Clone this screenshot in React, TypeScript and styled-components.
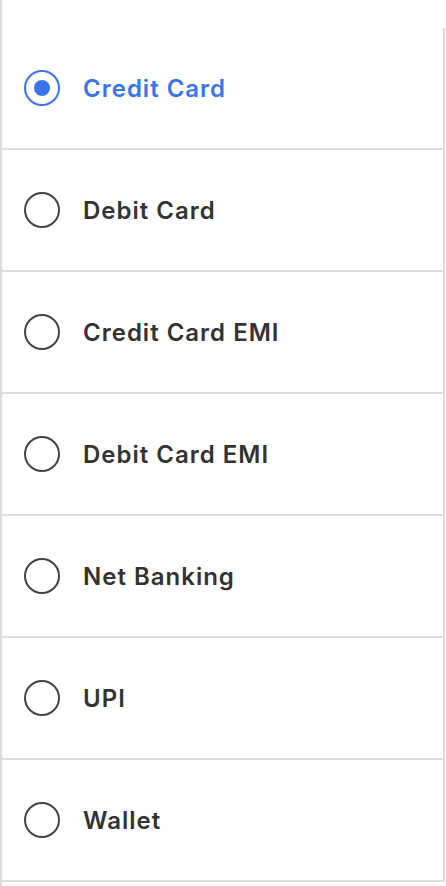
import React, { useState } from "react";
import styled, { createGlobalStyle } from "styled-components";

const GlobalStyle = createGlobalStyle`
  html, body {
    margin: 0;
    padding: 0;
    background: #ffffff;
  }
  body {
    font-family: Inter, "Noto Sans", sans-serif;
    -webkit-font-smoothing: antialiased;
  }
`;

const Page = styled.div`
  min-height: 886px;
  border-left: 2px solid #dedede;
  padding-top: 28px;
  box-sizing: border-box;
`;

const List = styled.ul`
  list-style: none;
  margin: 0;
  padding: 0;
  width: 441px;
  border-right: 2px solid #dedede;
`;

const Option = styled.li`
  display: flex;
  align-items: center;
  gap: 23px;
  height: 120px;
  padding-left: 22px;
  border-bottom: 2px solid #dedede;
  cursor: pointer;
`;

const Radio = styled.span<{ $checked: boolean }>`
  position: relative;
  width: 36px;
  height: 36px;
  box-sizing: border-box;
  border-radius: 50%;
  border: 2px solid ${(p) => (p.$checked ? "#3b74e6" : "#444444")};
  flex-shrink: 0;

  &::after {
    content: "";
    display: ${(p) => (p.$checked ? "block" : "none")};
    position: absolute;
    top: 8px;
    left: 8px;
    width: 16px;
    height: 16px;
    border-radius: 50%;
    background: #3b74e6;
  }
`;

const Label = styled.span<{ $checked: boolean }>`
  font-size: 24px;
  font-weight: 600;
  color: ${(p) => (p.$checked ? "#3b74e6" : "#333333")};
  letter-spacing: 1px;
`;

const methods = [
  "Credit Card",
  "Debit Card",
  "Credit Card EMI",
  "Debit Card EMI",
  "Net Banking",
  "UPI",
  "Wallet",
];

const App = () => {
  const [selected, setSelected] = useState("Credit Card");

  return (
    <>
      <GlobalStyle />
      <Page>
        <List>
          {methods.map((m) => (
            <Option key={m} onClick={() => setSelected(m)}>
              <Radio $checked={selected === m} />
              <Label $checked={selected === m}>{m}</Label>
            </Option>
          ))}
        </List>
      </Page>
    </>
  );
};

export default App;
